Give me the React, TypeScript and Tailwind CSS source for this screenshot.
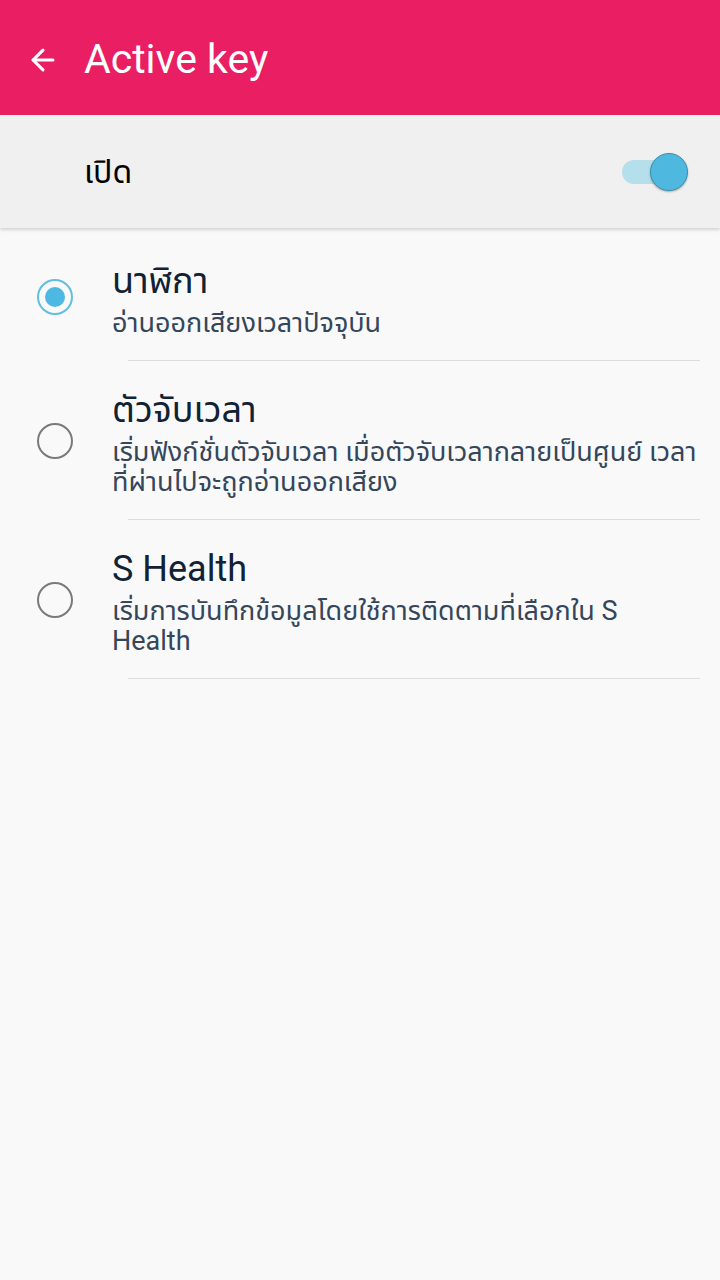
import { ArrowLeft } from "lucide-react"

const items = [
    { title: "นาฬิกา", desc: "อ่านออกเสียงเวลาปัจจุบัน", checked: true },
    { title: "ตัวจับเวลา", desc: "เริ่มฟังก์ชั่นตัวจับเวลา เมื่อตัวจับเวลากลายเป็นศูนย์ เวลา\nที่ผ่านไปจะถูกอ่านออกเสียง", checked: false },
    { title: "S Health", desc: "เริ่มการบันทึกข้อมูลโดยใช้การติดตามที่เลือกใน S\nHealth", checked: false },
]

function Radio({ checked }: { checked: boolean }) {
    if (checked) {
        return (
            <span className="w-[36px] h-[36px] rounded-full border-2 border-[#5fc0e0] flex items-center justify-center">
                <span className="w-[20px] h-[20px] rounded-full bg-[#4db9e2]" />
            </span>
        )
    }
    return <span className="w-[36px] h-[36px] rounded-full border-2 border-[#7a7a7a]" />
}

export default function App() {
    return (
        <div className="min-h-[1280px] bg-[#f9f9f9] font-['Roboto','Noto_Sans','Noto_Sans_Thai',sans-serif]">
            <header className="h-[115px] bg-[#e91e63] flex items-center pl-[26px] pt-[4px]">
                <ArrowLeft className="text-white w-[34px] h-[34px]" strokeWidth={2.2} />
                <h1 className="ml-[24px] text-white text-[41px]">Active key</h1>
            </header>
            <div className="h-[113px] bg-[#f0f0f0] flex items-center justify-between pl-[84px] pr-[32px] shadow-[0_2px_3px_rgba(0,0,0,0.15)] relative">
                <span className="text-[32px] text-black">เปิด</span>
                <div className="relative w-[66px] h-[40px] flex items-center">
                    <span className="w-[58px] h-[24px] rounded-full bg-[#b5dfea]" />
                    <span className="absolute right-0 top-[1px] w-[38px] h-[38px] rounded-full bg-[#4fb8df] border border-[#3a8fb0] shadow-[0_1px_2px_rgba(0,0,0,0.3)]" />
                </div>
            </div>
            <ul className="pt-[4px]">
                {items.map((it) => (
                    <li key={it.title}>
                        <div className="flex items-center pt-[30px] pb-[22px]">
                            <div className="w-[112px] flex justify-center pr-[2px] mb-[6px] shrink-0">
                                <Radio checked={it.checked} />
                            </div>
                            <div className="pr-[6px]">
                                <div className="text-[36px] leading-[38px] text-[#102233]">{it.title}</div>
                                <div className="mt-[8px] text-[27px] leading-[30px] text-[#35465a] whitespace-pre-line">{it.desc}</div>
                            </div>
                        </div>
                        <div className="ml-[128px] mr-[20px] h-px bg-[#dcdcdc]" />
                    </li>
                ))}
            </ul>
        </div>
    )
}
